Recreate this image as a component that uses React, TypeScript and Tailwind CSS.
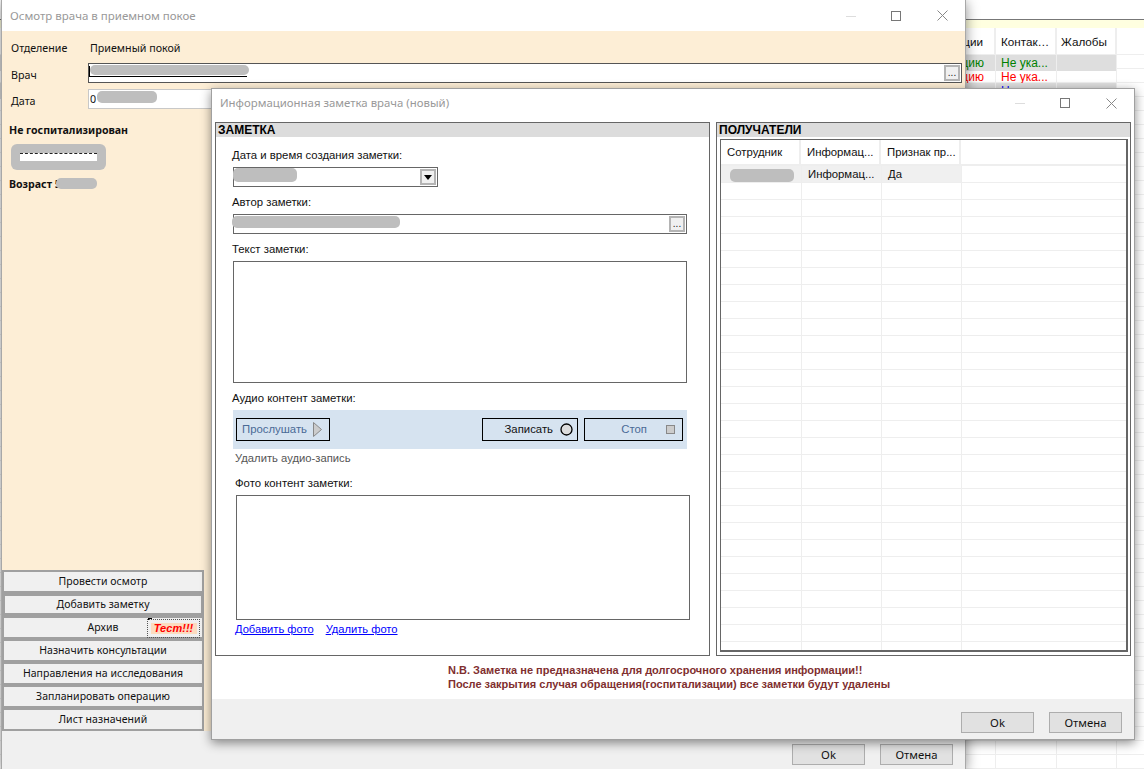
const ui = "font-['Liberation_Sans',sans-serif]";
const wide = "font-['Noto_Sans',sans-serif]";

function Blur({ className }: { className: string }) {
  return <div className={`absolute bg-[#bebebe] rounded-[5px] ${className}`} />;
}

function Caption() {
  return (
    <div className="flex items-center">
      <svg width="10" height="10" viewBox="0 0 10 10" className="mr-[35px]">
        <path d="M0 5.5H10" stroke="#dddddd" strokeWidth="1" />
      </svg>
      <svg width="10" height="10" viewBox="0 0 10 10" className="mr-[36px]">
        <rect x="0.5" y="0.5" width="9" height="9" fill="none" stroke="#777" strokeWidth="1" />
      </svg>
      <svg width="11" height="11" viewBox="0 0 11 11">
        <path d="M0.5 0.5L10.5 10.5M10.5 0.5L0.5 10.5" stroke="#888" strokeWidth="1" />
      </svg>
    </div>
  );
}

function DlgButton({ children }: { children: string }) {
  return (
    <div className={`w-[73px] h-[21px] bg-[#e1e1e1] border border-[#adadad] flex items-center justify-center text-[11.3px] leading-none text-[#111] ${wide}`}>
      {children}
    </div>
  );
}

function Dots() {
  return (
    <div className={`w-[16px] h-[16px] bg-[#f0f0f0] border-2 border-[#b4b4b4] flex items-end justify-center pb-[1px] text-[10px] leading-none text-[#222] ${ui}`}>
      ...
    </div>
  );
}

function SideButton({ label, thick, children }: { label: string; thick?: boolean; children?: React.ReactNode }) {
  return (
    <div className={`relative h-[23px] bg-[#f0f0f0] border-[#a0a0a0] flex items-center justify-center text-[10.5px] text-[#111] tracking-[0.05px] ${thick ? "border-[3px]" : "border-2"} ${wide}`}>
      {label}
      {children}
    </div>
  );
}

function BackgroundGrid() {
  const rows = Array.from({ length: 51 }, (_, i) => i);
  const tone = (i: number) =>
    i === 0 ? "bg-[#dedede] text-[#008000]" : i === 1 ? "text-[#ff0000]" : i === 2 ? "bg-[#dedede] text-[#0000ff]" : "";
  return (
    <div className={`w-[1144px] h-[769px] bg-white overflow-hidden pt-[19px] text-[12px] ${ui}`}>
      <div className="h-[9px] bg-[#ffffe0] border-t border-[#777]" />
      <div className="grid grid-cols-[996px_61px_60px_1fr] h-[27px] border-b border-[#eee] leading-[27px] text-[11.7px]">
        <div className="border-r-2 border-[#eee] text-right pr-[11px] text-[#111]">ции</div>
        <div className="border-r-2 border-[#eee] pl-[5px] text-[#111]">Контак…</div>
        <div className="border-r-2 border-[#eee] pl-[4px] text-[#111]">Жалобы</div>
        <div />
      </div>
      {rows.map((i) => (
        <div key={i} className="grid grid-cols-[996px_61px_60px_1fr] h-[14px] leading-[16px] border-b border-[#eee]">
          <div className={`border-r border-[#eee] text-right pr-[11px] ${tone(i)}`}>{i < 3 ? "цию" : ""}</div>
          <div className={`border-r border-[#eee] pl-[5px] ${tone(i)}`}>{i < 3 ? "Не ука..." : ""}</div>
          <div className={`border-r border-[#eee] ${i === 0 || i === 2 ? "bg-[#dedede]" : ""}`} />
          <div />
        </div>
      ))}
    </div>
  );
}

function ExamWindow() {
  return (
    <div className="absolute left-[1px] top-0 w-[965px] h-[769px] flex flex-col bg-[#f0f0f0] border-x border-[#a8a8a8] shadow-[0_2px_12px_rgba(0,0,0,0.45)]">
      <div className="h-[31px] shrink-0 bg-white flex items-center justify-between pl-[8px] pr-[17px]">
        <span className={`mt-[1px] text-[11.5px] text-[#999] ${wide}`}>Осмотр врача в приемном покое</span>
        <Caption />
      </div>
      <div className={`h-[700px] shrink-0 bg-[#fdeed6] flex flex-col text-[10.7px] text-[#111] ${wide}`}>
        <div className="flex items-center h-[20px] mt-[7px] pl-[9px]">
          <span className="w-[79px]">Отделение</span>
          <span>Приемный покой</span>
        </div>
        <div className="flex h-[20px] mt-[5px] pl-[9px]">
          <span className="w-[77px] pt-[4px]">Врач</span>
          <div className="relative w-[874px] h-[20px] bg-white border border-[#555]">
            <div className="absolute left-0 top-[12px] w-[158px] h-[1px] bg-black" />
            <div className="absolute left-0 top-[2px] w-[1px] h-[10px] bg-black" />
            <Blur className="left-[1px] top-[1px] w-[159px] h-[10px]" />
            <div className="absolute right-[1px] top-[1px]"><Dots /></div>
          </div>
        </div>
        <div className="flex h-[20px] mt-[6px] pl-[9px]">
          <span className="w-[77px] pt-[4px]">Дата</span>
          <div className="relative w-[300px] h-[20px] bg-white border border-[#c8c8c8] pl-[1px] leading-[18px]">
            0
            <Blur className="left-[8px] top-[1px] w-[60px] h-[12px]" />
          </div>
        </div>
        <div className="pl-[7px] mt-[13px] font-bold text-[10.6px] leading-[16px]">Не госпитализирован</div>
        <div className="relative ml-[9px] mt-[6px] w-[95px] h-[26px] bg-[#bebebe] rounded-[6px] flex items-center justify-center">
          <div className="w-[77px] h-[8px] bg-white border-t border-dashed border-[#222]" />
        </div>
        <div className="relative pl-[7px] mt-[6px] font-bold text-[10.6px] leading-[16px]">
          Возраст 5
          <Blur className="left-[54px] top-[2px] w-[41px] h-[11px]" />
        </div>
        <div className="mt-auto w-[202px] flex flex-col">
          <SideButton label="Провести осмотр" />
          <SideButton label="Добавить заметку" thick />
          <SideButton label="Архив">
            <div className="absolute left-[144px] top-0 w-[4px] h-[2px] border-x border-t border-black" />
            <div className="absolute right-[2px] top-[1px] w-[53px] h-[19px] border border-dotted border-[#555] flex items-center justify-center">
              <span className={`bg-[#fcdcc0] w-[46px] h-[11px] leading-[11px] text-center text-[11px] font-bold italic text-[#ff0000] tracking-normal ${ui}`}>Тест!!!</span>
            </div>
          </SideButton>
          <SideButton label="Назначить консультации" />
          <SideButton label="Направления на исследования" />
          <SideButton label="Запланировать операцию" />
          <SideButton label="Лист назначений" />
        </div>
      </div>
      <div className="flex-1 flex justify-end items-start gap-[15px] pt-[13px] pr-[12px]">
        <DlgButton>Ok</DlgButton>
        <DlgButton>Отмена</DlgButton>
      </div>
    </div>
  );
}

function NotePanel() {
  const label = "h-[14px] leading-[14px] text-[11.35px] text-[#111]";
  const box = "border border-[#666] bg-white";
  return (
    <div className={`w-[495px] h-[534px] border border-[#666] flex flex-col ${ui}`}>
      <div className="h-[14px] bg-[#dcdcdc] pl-[2px] text-[12px] leading-[14px] font-bold text-black">ЗАМЕТКА</div>
      <div className="flex-1 flex flex-col pl-[16px]">
        <div className={`${label} mt-[11px]`}>Дата и время создания заметки:</div>
        <div className={`relative ${box} mt-[5px] ml-[1px] w-[205px] h-[20px]`}>
          <Blur className="-left-[1px] top-0 w-[64px] h-[14px]" />
          <div className="absolute right-[1px] top-[1px] w-[16px] h-[16px] bg-[#f0f0f0] border-2 border-[#b4b4b4] flex items-center justify-center">
            <svg width="8" height="5" viewBox="0 0 8 5"><path d="M0 0H8L4 5Z" fill="#000" /></svg>
          </div>
        </div>
        <div className={`${label} mt-[8px]`}>Автор заметки:</div>
        <div className={`relative ${box} mt-[5px] ml-[1px] w-[454px] h-[20px]`}>
          <Blur className="-left-[2px] top-[1px] w-[168px] h-[12px]" />
          <div className="absolute right-[1px] top-[1px]"><Dots /></div>
        </div>
        <div className={`${label} mt-[8px]`}>Текст заметки:</div>
        <div className={`${box} mt-[5px] ml-[1px] w-[454px] h-[122px]`} />
        <div className={`${label} mt-[8px]`}>Аудио контент заметки:</div>
        <div className="mt-[5px] ml-[1px] w-[454px] h-[39px] bg-[#d6e3f0] flex items-center pl-[3px] pr-[4px] text-[11.35px]">
          <div className="w-[94px] h-[23px] border border-black flex items-center pl-[5px] pr-[7px] justify-between text-[#4a6a96]">
            Прослушать
            <svg width="9" height="15" viewBox="0 0 9 15"><path d="M0.5 0.5L8.5 7.5L0.5 14.5Z" fill="#cccccc" stroke="#888" /></svg>
          </div>
          <div className="ml-auto w-[96px] h-[23px] border border-black flex items-center justify-end pr-[4px] gap-[7px] text-[#111]">
            Записать
            <svg width="13" height="13" viewBox="0 0 13 13"><circle cx="6.5" cy="6.5" r="5.5" fill="#dddddd" stroke="#000" strokeWidth="1.3" /></svg>
          </div>
          <div className="ml-[6px] w-[99px] h-[23px] border border-black flex items-center justify-end pr-[7px] gap-[19px] text-[#4a6a96]">
            Стоп
            <svg width="9" height="9" viewBox="0 0 9 9"><rect x="0.5" y="0.5" width="8" height="8" fill="#cccccc" stroke="#888" /></svg>
          </div>
        </div>
        <div className="h-[14px] leading-[14px] text-[11.25px] text-[#555] mt-[2px] ml-[3px]">Удалить аудио-запись</div>
        <div className={`${label} mt-[11px] ml-[3px]`}>Фото контент заметки:</div>
        <div className={`${box} mt-[5px] ml-[4px] w-[454px] h-[125px]`} />
        <div className="flex mt-[2px] ml-[3px] gap-[12px] text-[11.15px] leading-[14px] text-[#0000ff] underline">
          <span>Добавить фото</span>
          <span>Удалить фото</span>
        </div>
      </div>
    </div>
  );
}

function RecipientsPanel() {
  const rows = Array.from({ length: 29 }, (_, i) => i);
  const head = "w-[80px] shrink-0 border-r-2 border-[#eee] pl-[6px] whitespace-nowrap overflow-hidden";
  const cell = "shrink-0 border-r border-[#eee] pl-[6px] whitespace-nowrap";
  return (
    <div className={`w-[415px] h-[534px] border border-[#666] flex flex-col text-[11.35px] text-[#111] ${ui}`}>
      <div className="h-[14px] shrink-0 bg-[#dcdcdc] pl-[2px] text-[12px] leading-[14px] font-bold text-black">ПОЛУЧАТЕЛИ</div>
      <div className="mt-[2px] ml-[3px] mr-[2px] h-[513px] border border-[#666] border-r-2 border-b-2 overflow-hidden flex flex-col">
        <div className="flex h-[26px] shrink-0 border-b-2 border-[#eee] leading-[24px]">
          <div className={head}>Сотрудник</div>
          <div className={head}>Информац...</div>
          <div className={head}>Признак пр...</div>
        </div>
        {rows.map((i) => (
          <div key={i} className="flex h-[17px] shrink-0 border-b border-[#eee] leading-[16px]">
            <div className={`relative w-[81px] ${cell} ${i === 0 ? "bg-[#f0f0f0]" : ""}`}>
              {i === 0 && <Blur className="left-[9px] top-[3px] w-[64px] h-[13px]" />}
            </div>
            <div className={`w-[80px] ${cell} ${i === 0 ? "bg-[#f0f0f0]" : ""}`}>{i === 0 ? "Информац..." : ""}</div>
            <div className={`w-[80px] ${cell} ${i === 0 ? "bg-[#f0f0f0]" : ""}`}>{i === 0 ? "Да" : ""}</div>
          </div>
        ))}
      </div>
    </div>
  );
}

function NoteDialog() {
  return (
    <div className="absolute left-[211px] top-[88px] w-[924px] h-[652px] flex flex-col bg-white border border-[#a0a0a0] shadow-[0_3px_10px_rgba(0,0,0,0.45)]">
      <div className="h-[33px] shrink-0 flex items-center justify-between pl-[8px] pr-[17px] pb-[5px]">
        <span className={`text-[11.4px] text-[#999] ${wide}`}>Информационная заметка врача (новый)</span>
        <Caption />
      </div>
      <div className="flex gap-[6px] pl-[3px]">
        <NotePanel />
        <RecipientsPanel />
      </div>
      <div className={`pl-[236px] mt-[7px] text-[11px] leading-[14px] font-bold text-[#7f2f2f] ${ui}`}>
        <div>N.B. Заметка не предназначена для долгосрочного хранения информации!!</div>
        <div>После закрытия случая обращения(госпитализации) все заметки будут удалены</div>
      </div>
      <div className="mt-auto h-[40px] bg-[#f0f0f0] flex justify-end items-start gap-[15px] pt-[13px] pr-[12px]">
        <DlgButton>Ok</DlgButton>
        <DlgButton>Отмена</DlgButton>
      </div>
    </div>
  );
}

export default function App() {
  return (
    <div className="relative w-[1144px] h-[769px] overflow-hidden">
      <BackgroundGrid />
      <ExamWindow />
      <NoteDialog />
    </div>
  );
}
